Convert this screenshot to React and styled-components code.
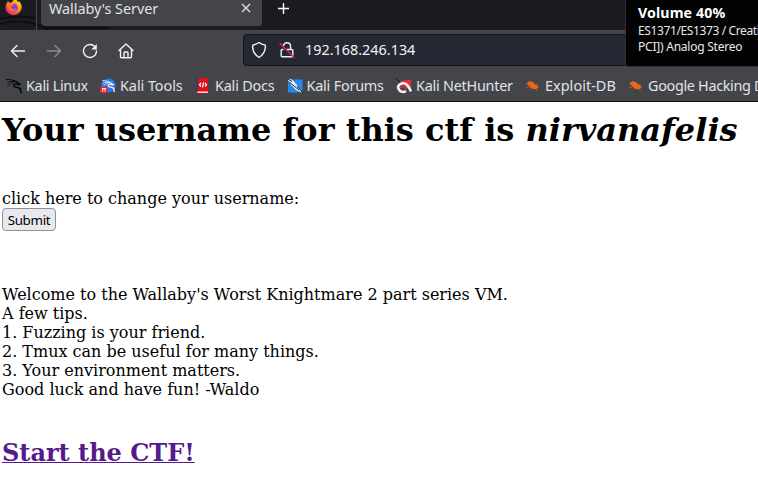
import React from "react";
import styled, { createGlobalStyle } from "styled-components";

const Global = createGlobalStyle`
  * { box-sizing: border-box; }
  html, body { margin: 0; background: #fff; overflow: hidden; }
`;

const Window = styled.div`
  position: relative;
  width: 758px;
  height: 489px;
  overflow: hidden;
  background: #fff;
  font-family: "Noto Sans", sans-serif;
  color: #e2e2e4;
`;

const TabBar = styled.header`
  position: relative;
  display: flex;
  align-items: flex-start;
  height: 30px;
  background: #1b1c20;
`;

const Wallpaper = styled.svg`
  position: absolute;
  left: 0;
  top: 0;
`;

const PinnedTab = styled.div`
  position: relative;
  width: 37px;
  height: 30px;
  border-right: 1px solid #4b4c51;
  svg { display: block; margin: -2px 0 0 5px; }
`;

const Tab = styled.div`
  position: relative;
  display: flex;
  justify-content: space-between;
  width: 221px;
  height: 26px;
  margin-left: 4px;
  padding: 0 11px 0 8px;
  background: #43454b;
  border-radius: 0 0 4px 4px;
  svg { margin-top: 3px; }
`;

const TabTitle = styled.span`
  font-size: 14.4px;
  letter-spacing: -0.05px;
  line-height: 18px;
  white-space: nowrap;
`;

const NewTab = styled.div`
  margin: 2px 0 0 15px;
  svg { display: block; }
`;

const NavBar = styled.nav`
  display: flex;
  align-items: center;
  height: 41px;
  padding-left: 9px;
  background: #43454b;
`;

const NavButton = styled.span`
  display: flex;
  width: 18px;
  margin-right: 18px;
  opacity: ${(p) => (p.$dim ? 0.42 : 1)};
`;

const AddressBar = styled.div`
  display: flex;
  align-items: center;
  flex: 1;
  height: 32px;
  margin-left: 90px;
  margin-top: -1px;
  padding-left: 6px;
  border: 1px solid #131419;
  border-right: 0;
  border-radius: 4px 0 0 4px;
  background: #252732;
  svg { margin-right: 10px; }
`;

const Address = styled.span`
  font-size: 14.4px;
  line-height: 20px;
  margin-left: -1px;
  color: #f2f2f4;
`;

const Bookmarks = styled.div`
  display: flex;
  align-items: center;
  height: 31px;
  padding-left: 6px;
  background: #43454b;
  border-bottom: 1px solid #0b0c0e;
`;

const Bookmark = styled.div`
  display: flex;
  flex: none;
  align-items: center;
  gap: 4px;
  width: ${(p) => p.$width}px;
  font-size: 14.4px;
  letter-spacing: ${(p) => p.$spacing}px;
  line-height: 20px;
  white-space: nowrap;
  svg { flex: none; }
`;

const Toast = styled.aside`
  position: absolute;
  left: 625px;
  top: -8px;
  width: 150px;
  height: 75px;
  padding: 10px 0 0 12px;
  border: 1px solid #303137;
  border-radius: 4px;
  background: #030304;
  white-space: nowrap;
`;

const ToastTitle = styled.div`
  font-size: 14.2px;
  letter-spacing: 0.1px;
  font-weight: 700;
  line-height: 20px;
  color: #fff;
`;

const ToastText = styled.div`
  font-size: 12px;
  line-height: 16px;
  letter-spacing: ${(p) => p.$spacing || 0}px;
  color: #e8e8e8;
`;

const Page = styled.main`
  padding: 9px 2px 0;
  font-family: "DejaVu Serif", serif;
  font-size: 16px;
  line-height: 19px;
  color: #000;
  white-space: nowrap;
`;

const Heading = styled.h1`
  margin: 0 0 40px;
  font-size: 32px;
  line-height: 38px;
`;

const Submit = styled.button`
  display: block;
  width: 54px;
  height: 23px;
  padding: 0;
  border: 1px solid #8f8f9d;
  border-radius: 4px;
  background: #e9e9ed;
  color: #000;
  font: 13.33px/18px "Noto Sans", sans-serif;
  letter-spacing: -0.3px;
`;

const Tips = styled.div`
  margin-top: 54px;
`;

const Start = styled.h2`
  margin: 40px 0 0;
  font-size: 24px;
  line-height: 28px;
`;

const StartLink = styled.a`
  color: #551a8b;
  text-decoration: underline;
  text-decoration-thickness: 1px;
`;

const Line = ({ size = 18, width = 1.4, children }) => (
  <svg width={size} height={size} viewBox="0 0 18 18" fill="none" stroke="#f1f1f3" strokeWidth={width} strokeLinecap="round" strokeLinejoin="round">
    {children}
  </svg>
);

const Firefox = () => (
  <svg width="18" height="18" viewBox="0 0 18 18">
    <defs>
      <linearGradient id="flame" x1="1" y1="0" x2="0.2" y2="1">
        <stop offset="0" stopColor="#fff044" />
        <stop offset="0.45" stopColor="#ff980e" />
        <stop offset="1" stopColor="#f5156c" />
      </linearGradient>
    </defs>
    <path d="M3 3l2 2 2-1 3-4 3 4 1-1c3 3 3.500 7 1.500 10-3 5-11 5.500-14 0C-.5 9 1 6 3 3z" fill="url(#flame)" />
    <circle cx="8.800" cy="9.500" r="3.700" fill="#7543e5" />
    <path d="M2 7c3-2 5-1 7 0-1 1-2 1-3 2 0 2 3 3 5 1 0 3-6 5-8 0z" fill="#ff7139" />
  </svg>
);

const Dragon = ({ color = "#08090b" }) => (
  <g fill="none" stroke={color} strokeLinecap="round" strokeLinejoin="round">
    <path d="M.5 1.500c3-.5 5 .3 8 1.500M1.500 4.500c3-1.500 5-1.200 7-1" strokeWidth="1" />
    <path d="M7 3.200c2-.4 4 .6 5.500 2.300l1.700.8-2.400.1C9 5.500 7 6.500 8 8.300c1.200 1.500 4.500.4 6 2.500.9 1.300.8 2.500 1 4" strokeWidth="1.600" />
    <path d="M2 7.800c1.500-2.300 3.500-2.800 5-2.700M13 10l2.300.6" strokeWidth=".9" />
  </g>
);

const ICONS = {
  linux: <Dragon />,
  tools: (
    <>
      <circle cx="8.500" cy="7.500" r="7" fill="#2878e8" />
      <g transform="translate(2 1.500) scale(.82)"><Dragon color="#e5efff" /></g>
      <rect x="0" y="8" width="7.500" height="7.500" rx="3" fill="#e52a35" />
      <path d="M2 10.500h3.700M2.700 10.500v3M5 10.500v3" stroke="#fff" strokeWidth="1" />
    </>
  ),
  docs: (
    <>
      <path d="M1 0h12v15.500H1z" fill="#dc111b" />
      <path d="M1 0h2v13h-2z" fill="#343b64" />
      <path d="M2.500 13.500H13v1.500H2.500z" fill="#ece6e7" />
      <path d="M1.500 15.500H13" stroke="#b70d18" />
      <path d="M6 5L4.500 6.800 6 8.500M10 5l1.500 1.800L10 8.500M8.700 4.300l-1.300 5" fill="none" stroke="#fff" strokeWidth="1.200" />
    </>
  ),
  forums: (
    <>
      <path d="M1 1.500h14.500v13H1z" fill="#2587f2" />
      <path d="M0 .5l5 1 5 5.500 5 7.500-6-2.500-5-5z" fill="#f5f5f6" />
      <path d="M0 .5l5 3M2 4l10 8M10 8l6 7" fill="none" stroke="#17191e" strokeWidth="1" />
    </>
  ),
  hunter: (
    <>
      <path d="M4 3l11.500-1.500L14 13z" fill="#e72f39" />
      <path d="M1.800 9.500C3 5 8 4 11 7c2 2 3 4 4 6.500M2 9c1 5 5 6 8 4" fill="none" stroke="#f5f5f6" strokeWidth="2.500" />
      <path d="M4.500 10c1-2.500 4-2 6 1" fill="none" stroke="#e72f39" strokeWidth="1.800" />
      <path d="M0 .8l4 3" fill="none" stroke="#1b1c20" strokeWidth="1" />
    </>
  ),
  exploit: (
    <>
      <path d="M2.500 4.300c1.500-1.200 4.200-.8 6 .6l2.300 1.900c1.500.9 2.500 2.200 2.200 3.300-1.800 1.700-5.500 1.200-7.500-.5C3.500 8.200 1.800 6 2.500 4.300z" fill="#ed6518" />
      <path d="M3 6L1 5.500M5 5l-.5-1.500M8 5.500l1-1.500M4 9l-2.500.5M7 10.500l-1 1M11 7l2-.5M12 9l2 .3M11 11l1.500.8" stroke="#ed6518" strokeWidth=".8" />
    </>
  ),
};

const bookmarks = [
  ["linux", "Kali Linux", 94, -0.3],
  ["tools", "Kali Tools", 95, -0.05],
  ["docs", "Kali Docs", 91.5, -0.18],
  ["forums", "Kali Forums", 109.5, -0.2],
  ["hunter", "Kali NetHunter", 129, -0.24],
  ["exploit", "Exploit-DB", 103, 0.05],
  ["exploit", "Google Hacking DB", 160, -0.32],
];

export default function App() {
  return (
    <Window>
      <Global />
      <TabBar>
        <Wallpaper width="130" height="30" fill="none" stroke="#0e0f12" strokeWidth="2">
          <path d="M0 19q19-4 36-1M0 24q25-7 48 6M35 25q10 0 14 5M49 28h60" />
        </Wallpaper>
        <PinnedTab><Firefox /></PinnedTab>
        <Tab>
          <TabTitle>Wallaby's Server</TabTitle>
          <svg width="10" height="10" viewBox="0 0 10 10"><path d="M1 1l8 8M9 1L1 9" stroke="#e5e5e7" strokeWidth="1.200" /></svg>
        </Tab>
        <NewTab>
          <svg width="13" height="13" viewBox="0 0 13 13"><path d="M6.500 1v11M1 6.500h11" stroke="#fff" strokeWidth="1.400" /></svg>
        </NewTab>
      </TabBar>
      <NavBar>
        <NavButton><Line><path d="M15.500 9H2.500M8 3.500L2.500 9 8 14.500" /></Line></NavButton>
        <NavButton $dim><Line><path d="M2.500 9h13M10 3.500L15.500 9 10 14.500" /></Line></NavButton>
        <NavButton><Line><path d="M14.500 5.500A6.500 6.500 0 1 0 15.500 9" /><path d="M15.800 2v5.500h-5.500z" fill="#f1f1f3" stroke="none" /></Line></NavButton>
        <NavButton><Line><path d="M2 8.500L9 2l7 6.500M3.500 7.500v7.200q0 1 1 1h9q1 0 1-1V7.500M7 15.500V11q0-1 1-1h2q1 0 1 1v4.500" /></Line></NavButton>
        <AddressBar>
          <Line><path d="M9 1.500c2 1.500 4 2.200 6.300 2.600.5 5.500-1.700 9.500-6.300 12.400C4.400 13.600 2.200 9.600 2.700 4.100 5 3.700 7 3 9 1.500z" /></Line>
          <Line>
            <path d="M5.500 4.500C6 1 12 .5 12.500 4.500v4M5 8.500H4.200q-1 0-1 1v5.300q0 1 1 1h9.600q1 0 1-1V9.500q0-1-1-1H9" />
            <path d="M2 2.500l14 14" stroke="#df2459" />
          </Line>
          <Address>192.168.246.134</Address>
        </AddressBar>
      </NavBar>
      <Bookmarks>
        {bookmarks.map(([icon, label, width, spacing]) => (
          <Bookmark key={label} $width={width} $spacing={spacing}>
            <svg width="16" height="16" viewBox="0 0 16 16">{ICONS[icon]}</svg>
            {label}
          </Bookmark>
        ))}
      </Bookmarks>
      <Page>
        <Heading>Your username for this ctf is <i>nirvanafelis</i></Heading>
        <div>click here to change your username:</div>
        <Submit>Submit</Submit>
        <Tips>
          <div>Welcome to the Wallaby's Worst Knightmare 2 part series VM.</div>
          <div>A few tips.</div>
          <div>1. Fuzzing is your friend.</div>
          <div>2. Tmux can be useful for many things.</div>
          <div>3. Your environment matters.</div>
          <div>Good luck and have fun! -Waldo</div>
        </Tips>
        <Start><StartLink>Start the CTF!</StartLink></Start>
      </Page>
      <Toast>
        <ToastTitle>Volume 40%</ToastTitle>
        <ToastText $spacing={-0.38}>ES1371/ES1373 / Creative</ToastText>
        <ToastText $spacing={-0.23}>PCI]) Analog Stereo</ToastText>
      </Toast>
    </Window>
  );
}
